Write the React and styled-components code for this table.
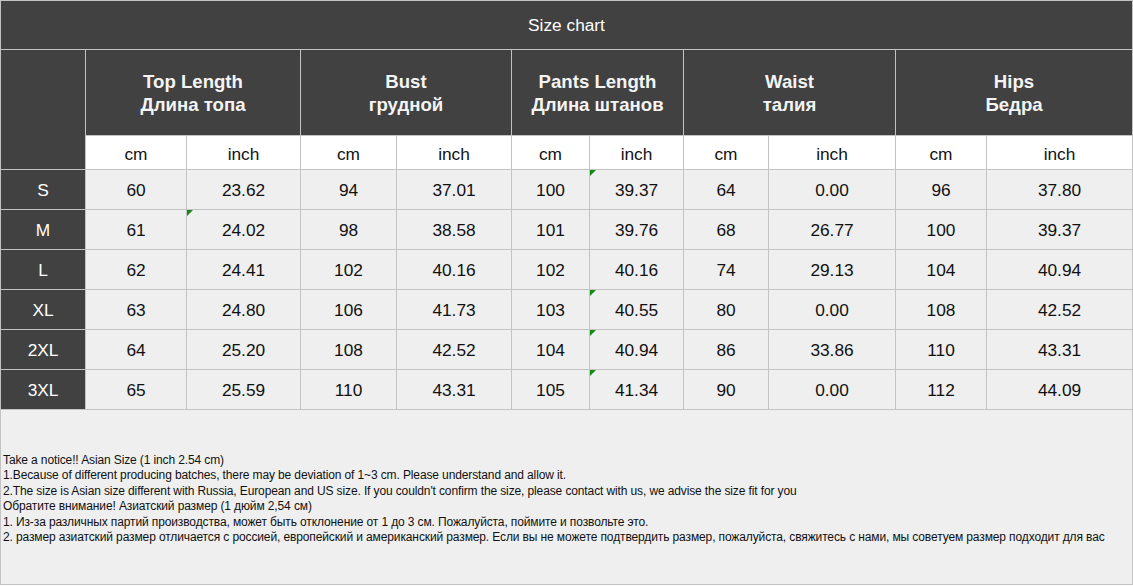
import React from "react";
import styled, { createGlobalStyle } from "styled-components";

const GlobalStyle = createGlobalStyle`
  html, body {
    margin: 0;
    padding: 0;
    background: #ffffff;
  }
  body {
    font-family: "Liberation Sans", Arial, sans-serif;
  }
`;

const Chart = styled.div`
  display: grid;
  grid-template-columns: 84px 100px 113px 95px 114px 77px 93px 84px 126px 90px 145px;
  grid-template-rows: 48px 85px 33px repeat(6, 39px) 174px;
  gap: 1px;
  padding: 1px;
  width: 1133px;
  box-sizing: border-box;
  background: #c3c3c3;
`;

const Cell = styled.div`
  display: flex;
  align-items: center;
  justify-content: center;
  text-align: center;
  font-size: 17.3px;
  box-sizing: border-box;
  padding-top: ${(p) => p.$drop || 0}px;
`;

const Title = styled(Cell)`
  grid-column: 1 / -1;
  background: #414141;
  color: #ffffff;
`;

const Corner = styled(Cell)`
  grid-row: span 2;
  background: #414141;
`;

const GroupHeader = styled(Cell)`
  grid-column: span 2;
  flex-direction: column;
  background: #414141;
  color: #f4f4f4;
  font-weight: 700;
  font-size: 18.6px;
  line-height: 23px;
`;

const Unit = styled(Cell)`
  background: #ffffff;
  color: #111111;
`;

const SizeLabel = styled(Cell)`
  background: #414141;
  color: #ffffff;
`;

const Value = styled(Cell)`
  position: relative;
  background: #efefef;
  color: #111111;

  &::before {
    content: "";
    display: ${(p) => (p.$flag ? "block" : "none")};
    position: absolute;
    top: 0;
    left: 0;
    border-top: 6px solid #138a13;
    border-right: 6px solid transparent;
  }
`;

const Notes = styled.div`
  grid-column: 1 / -1;
  background: #efefef;
  padding: 43px 0 0 2px;
  font-size: 12px;
  line-height: 15.4px;
  color: #111111;
  letter-spacing: -0.12px;
`;

const NoteLine = styled.div`
  white-space: nowrap;
`;

const groups = [
  ["Top Length", "Длина топа"],
  ["Bust", "грудной"],
  ["Pants Length", "Длина штанов"],
  ["Waist", "талия"],
  ["Hips", "Бедра"],
];

const rows = [
  ["S", "60", "23.62", "94", "37.01", "100", "39.37", "64", "0.00", "96", "37.80"],
  ["M", "61", "24.02", "98", "38.58", "101", "39.76", "68", "26.77", "100", "39.37"],
  ["L", "62", "24.41", "102", "40.16", "102", "40.16", "74", "29.13", "104", "40.94"],
  ["XL", "63", "24.80", "106", "41.73", "103", "40.55", "80", "0.00", "108", "42.52"],
  ["2XL", "64", "25.20", "108", "42.52", "104", "40.94", "86", "33.86", "110", "43.31"],
  ["3XL", "65", "25.59", "110", "43.31", "105", "41.34", "90", "0.00", "112", "44.09"],
];

// cells carrying the little green corner mark, as [row, column]
const flagged = ["1-2", "0-6", "3-6", "4-6", "5-6"];

const notes = [
  "Take a notice!! Asian Size (1 inch 2.54 cm)",
  "1.Because of different producing batches, there may be deviation of 1~3 cm. Please understand and allow it.",
  "2.The size is Asian size different with Russia, European and US size. If you couldn't confirm the size, please contact with us, we advise the size fit for you",
  "Обратите внимание! Азиатский размер (1 дюйм 2,54 см)",
  "1. Из-за различных партий производства, может быть отклонение от 1 до 3 см. Пожалуйста, поймите и позвольте это.",
  "2. размер азиатский размер отличается с россией, европейский и американский размер. Если вы не можете подтвердить размер, пожалуйста, свяжитесь с нами, мы советуем размер подходит для вас",
];

const App = () => {
  return (
    <>
      <GlobalStyle />
      <Chart>
        <Title>Size chart</Title>
        <Corner />
        {groups.map(([en, ru]) => (
          <GroupHeader key={en}>
            <span>{en}</span>
            <span>{ru}</span>
          </GroupHeader>
        ))}
        {groups.map(([en]) => (
          <React.Fragment key={en}>
            <Unit $drop={3}>cm</Unit>
            <Unit $drop={3}>inch</Unit>
          </React.Fragment>
        ))}
        {rows.map((row, r) => (
          <React.Fragment key={row[0]}>
            <SizeLabel $drop={2}>{row[0]}</SizeLabel>
            {row.slice(1).map((v, c) => (
              <Value key={c} $drop={2} $flag={flagged.includes(`${r}-${c + 1}`)}>
                {v}
              </Value>
            ))}
          </React.Fragment>
        ))}
        <Notes>
          {notes.map((n) => (
            <NoteLine key={n}>{n}</NoteLine>
          ))}
        </Notes>
      </Chart>
    </>
  );
};

export default App;
